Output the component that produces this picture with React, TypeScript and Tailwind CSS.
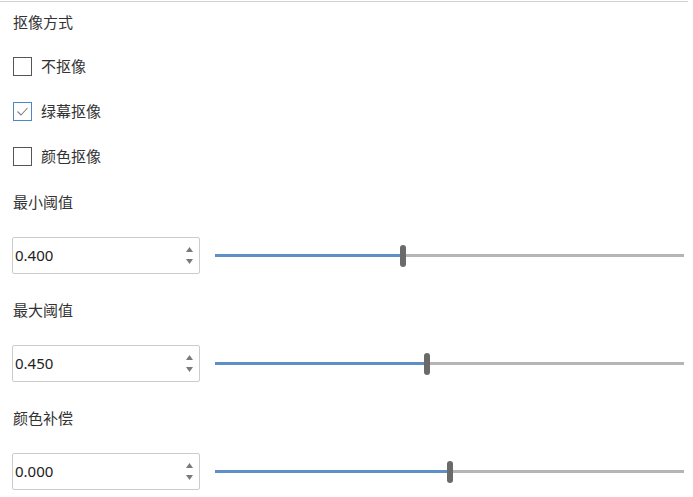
const font = { fontFamily: '"Noto Sans", "Noto Sans CJK SC", sans-serif' };

const modes = [
  { label: "不抠像", checked: false },
  { label: "绿幕抠像", checked: true },
  { label: "颜色抠像", checked: false },
];

const thresholds = [
  { label: "最小阈值", value: "0.400", pct: 40.1 },
  { label: "最大阈值", value: "0.450", pct: 45.2 },
  { label: "颜色补偿", value: "0.000", pct: 50.1 },
];

function Checkbox({ checked }: { checked: boolean }) {
  return (
    <div
      className={`w-[19px] h-[19px] border bg-white ${
        checked ? "border-[#4f86c6]" : "border-[#555555]"
      }`}
    >
      {checked && (
        <svg width="17" height="17" viewBox="0 0 17 17">
          <polyline points="3.5,8.5 7,12 13.5,5" fill="none" stroke="#808080" strokeWidth="1.1" />
        </svg>
      )}
    </div>
  );
}

function NumberBox({ value }: { value: string }) {
  return (
    <div className="w-[188px] h-[37px] border border-[#cccccc] rounded-[2px] bg-white flex items-center justify-between pl-[2px] pr-[6px] ml-[-1px]">
      <span className="text-[15px] text-[#222222]">{value}</span>
      <div className="flex flex-col gap-[7px] items-center">
        <svg width="7" height="5" viewBox="0 0 7 5">
          <polygon points="3.5,0 7,5 0,5" fill="#7a7a7a" />
        </svg>
        <svg width="7" height="5" viewBox="0 0 7 5">
          <polygon points="0,0 7,0 3.5,5" fill="#7a7a7a" />
        </svg>
      </div>
    </div>
  );
}

function Slider({ pct }: { pct: number }) {
  return (
    <div className="relative w-[469px] h-[22px] ml-[15px] flex items-center">
      <div className="h-[3px] bg-[#5f8fc7]" style={{ width: `${pct}%` }} />
      <div className="h-[3px] flex-1 bg-[#b5b5b5]" />
      <div
        className="absolute top-0 w-[6px] h-[22px] rounded-[3px] bg-[#6a6a6a] -translate-x-1/2"
        style={{ left: `${pct}%` }}
      />
    </div>
  );
}

export default function App() {
  return (
    <div className="w-[693px] h-[497px] bg-white overflow-hidden text-[#333333]" style={font}>
      <div className="mt-px h-px w-[688px] bg-[#d2d2d2]" />

      <div className="pl-[13px]">
        <div className="h-[40px] flex items-center text-[15px]">抠像方式</div>

        {/* mode options */}
        <div className="pt-[2px]">
          {modes.map((m) => (
            <div key={m.label} className="h-[45px] flex items-center gap-[9px]">
              <Checkbox checked={m.checked} />
              <span className="text-[15px]">{m.label}</span>
            </div>
          ))}
        </div>

        {/* threshold sections */}
        <div className="flex flex-col gap-[13px]">
          {thresholds.map((t) => (
            <div key={t.label}>
              <div className="h-[46px] flex items-center text-[15px]">{t.label}</div>
              <div className="mt-3 flex items-center">
                <NumberBox value={t.value} />
                <Slider pct={t.pct} />
              </div>
            </div>
          ))}
        </div>
      </div>
    </div>
  );
}
